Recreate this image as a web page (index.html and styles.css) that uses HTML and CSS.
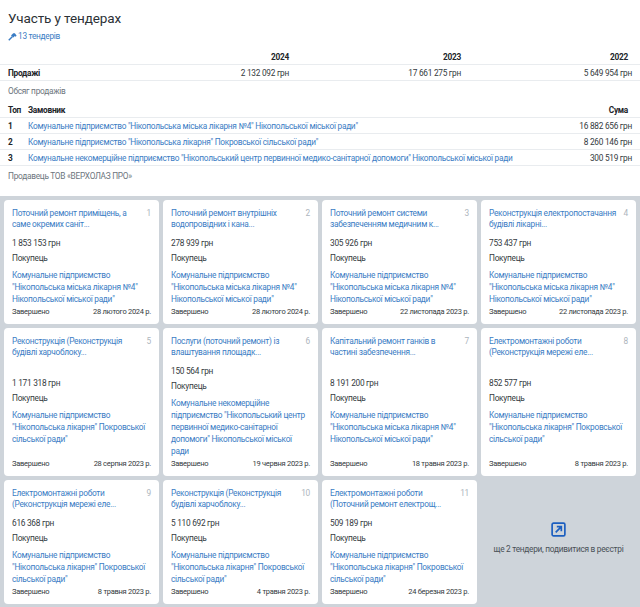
FILE: index.html
```html
<!DOCTYPE html>
<html lang="uk">
<head>
<meta charset="utf-8">
<title>Участь у тендерах</title>
<link rel="stylesheet" href="styles.css">
</head>
<body>
<section class="summary">
  <h1>Участь у тендерах</h1>
  <a class="count" href="#"><svg class="hammer" viewBox="0 0 12 12"><path d="M1 11 6 6" stroke="currentColor" stroke-width="2" fill="none"/><path d="M4 4.6 7 1.5h2.2l2.3 3.6-1.5 1.3-1-1-1.6 1.8z" fill="currentColor"/></svg>13 тендерів</a>
  <table class="years">
    <thead><tr><th></th><th>2024</th><th>2023</th><th class="last">2022</th></tr></thead>
    <tbody><tr><th>Продажі</th><td>2 132 092 грн</td><td>17 661 275 грн</td><td>5 649 954 грн</td></tr></tbody>
  </table>
  <p class="note note-sales">Обсяг продажів</p>
  <table class="top">
    <thead><tr><th class="rank">Топ</th><th class="name">Замовник</th><th class="last">Сума</th></tr></thead>
    <tbody>
      <tr><th>1</th><td class="name"><a href="#">Комунальне підприємство "Нікопольська міська лікарня №4" Нікопольської міської ради"</a></td><td>16 882 656 грн</td></tr>
      <tr><th>2</th><td class="name"><a href="#">Комунальне підприємство "Нікопольська лікарня" Покровської сільської ради"</a></td><td>8 260 146 грн</td></tr>
      <tr><th>3</th><td class="name"><a href="#">Комунальне некомерційне підприємство "Нікопольський центр первинної медико-санітарної допомоги" Нікопольської міської ради</a></td><td>300 519 грн</td></tr>
    </tbody>
  </table>
  <p class="note note-seller">Продавець ТОВ «ВЕРХОЛАЗ ПРО»</p>
</section>
<section class="grid">
  <article class="card"><div class="head"><a href="#">Поточний ремонт приміщень, а саме окремих саніт...</a><span>1</span></div><div class="body"><p class="price">1 853 153 грн</p><p class="role">Покупець</p><a class="buyer" href="#">Комунальне підприємство "Нікопольська міська лікарня №4" Нікопольської міської ради"</a></div><div class="foot"><span>Завершено</span><span>28 лютого 2024 р.</span></div></article>
  <article class="card"><div class="head"><a href="#">Поточний ремонт внутрішніх водопровідних і кана...</a><span>2</span></div><div class="body"><p class="price">278 939 грн</p><p class="role">Покупець</p><a class="buyer" href="#">Комунальне підприємство "Нікопольська міська лікарня №4" Нікопольської міської ради"</a></div><div class="foot"><span>Завершено</span><span>28 лютого 2024 р.</span></div></article>
  <article class="card"><div class="head"><a href="#">Поточний ремонт системи забезпеченням медичним к...</a><span>3</span></div><div class="body"><p class="price">305 926 грн</p><p class="role">Покупець</p><a class="buyer" href="#">Комунальне підприємство "Нікопольська міська лікарня №4" Нікопольської міської ради"</a></div><div class="foot"><span>Завершено</span><span>22 листопада 2023 р.</span></div></article>
  <article class="card"><div class="head"><a href="#">Реконструкція електропостачання будівлі лікарні...</a><span>4</span></div><div class="body"><p class="price">753 437 грн</p><p class="role">Покупець</p><a class="buyer" href="#">Комунальне підприємство "Нікопольська міська лікарня №4" Нікопольської міської ради"</a></div><div class="foot"><span>Завершено</span><span>22 листопада 2023 р.</span></div></article>
  <article class="card"><div class="head"><a href="#">Реконструкція (Реконструкція будівлі харчоблоку...</a><span>5</span></div><div class="body"><p class="price">1 171 318 грн</p><p class="role">Покупець</p><a class="buyer" href="#">Комунальне підприємство "Нікопольська лікарня" Покровської сільської ради"</a></div><div class="foot"><span>Завершено</span><span>28 серпня 2023 р.</span></div></article>
  <article class="card"><div class="head"><a href="#">Послуги (поточний ремонт) із влаштування площадк...</a><span>6</span></div><div class="body"><p class="price">150 564 грн</p><p class="role">Покупець</p><a class="buyer" href="#">Комунальне некомерційне підприємство "Нікопольський центр первинної медико-санітарної допомоги" Нікопольської міської ради</a></div><div class="foot"><span>Завершено</span><span>19 червня 2023 р.</span></div></article>
  <article class="card"><div class="head"><a href="#">Капітальний ремонт ганків в частині забезпечення...</a><span>7</span></div><div class="body"><p class="price">8 191 200 грн</p><p class="role">Покупець</p><a class="buyer" href="#">Комунальне підприємство "Нікопольська міська лікарня №4" Нікопольської міської ради"</a></div><div class="foot"><span>Завершено</span><span>18 травня 2023 р.</span></div></article>
  <article class="card"><div class="head"><a href="#">Електромонтажні роботи (Реконструкція мережі еле...</a><span>8</span></div><div class="body"><p class="price">852 577 грн</p><p class="role">Покупець</p><a class="buyer" href="#">Комунальне підприємство "Нікопольська лікарня" Покровської сільської ради"</a></div><div class="foot"><span>Завершено</span><span>8 травня 2023 р.</span></div></article>
  <article class="card"><div class="head"><a href="#">Електромонтажні роботи (Реконструкція мережі еле...</a><span>9</span></div><div class="body"><p class="price">616 368 грн</p><p class="role">Покупець</p><a class="buyer" href="#">Комунальне підприємство "Нікопольська лікарня" Покровської сільської ради"</a></div><div class="foot"><span>Завершено</span><span>8 травня 2023 р.</span></div></article>
  <article class="card"><div class="head"><a href="#">Реконструкція (Реконструкція будівлі харчоблоку...</a><span>10</span></div><div class="body"><p class="price">5 110 692 грн</p><p class="role">Покупець</p><a class="buyer" href="#">Комунальне підприємство "Нікопольська лікарня" Покровської сільської ради"</a></div><div class="foot"><span>Завершено</span><span>4 травня 2023 р.</span></div></article>
  <article class="card"><div class="head"><a href="#">Електромонтажні роботи (Поточний ремонт електрощ...</a><span>11</span></div><div class="body"><p class="price">509 189 грн</p><p class="role">Покупець</p><a class="buyer" href="#">Комунальне підприємство "Нікопольська лікарня" Покровської сільської ради"</a></div><div class="foot"><span>Завершено</span><span>24 березня 2023 р.</span></div></article>
  <a class="more" href="#"><svg viewBox="0 0 16 16"><rect x="1.2" y="1.2" width="13.6" height="13.6" rx="1.5" fill="none" stroke="currentColor" stroke-width="1.8"/><path d="M5 11 10.5 5.5M6.2 5h4.8v4.8" fill="none" stroke="currentColor" stroke-width="1.8"/></svg><span>ще 2 тендери, подивитися в реєстрі</span></a>
</section>
</body>
</html>
```
FILE: styles.css
```css
* { box-sizing: border-box; }
html, body { margin: 0; padding: 0; }
body {
  width: 640px;
  height: 607px;
  overflow: hidden;
  background: #fff;
  color: #343a40;
  font-family: Roboto, "Noto Sans", sans-serif;
  font-size: 8.3px;
  letter-spacing: -0.27px;
  line-height: 13px;
}
a { color: #3a7cc4; text-decoration: none; }
.summary { height: 196px; padding-top: 8px; }
h1 { margin: 0 0 0 8px; font-size: 13.5px; font-weight: 400; line-height: 21px; color: #2c3136; letter-spacing: -0.1px; }
.count { display: flex; align-items: center; gap: 1px; margin: 0 0 0 8px; height: 14px; }
.hammer { width: 9px; height: 9px; }
table { width: 640px; border-collapse: collapse; table-layout: fixed; }
th, td { padding: 2px 0 0; text-align: right; font-weight: 400; }
thead th { padding-top: 0; vertical-align: bottom; }
th { font-weight: 700; color: #212529; }
.years { margin-top: 4px; }
.years thead tr { height: 17px; }
.years tbody tr { height: 16px; }
.years tr { border-bottom: 1px solid #e9ecef; }
.years th:first-child { text-align: left; padding-left: 8px; width: 120px; }
.years thead th:nth-child(2) { width: 169px; }
.years thead th:nth-child(3) { width: 172px; }
.years td:last-child { padding-right: 8px; }
th.last { padding-right: 12px; }
.note { margin: 0; color: #6c757d; padding-left: 8px; }
.note-sales { padding-top: 4px; height: 20px; }
.top tr { height: 16px; border-bottom: 1px solid #e9ecef; }
.top thead tr { height: 17px; }
.top th:first-child { width: 28px; text-align: left; padding-left: 8px; }
.top .name { text-align: left; width: 512px; white-space: nowrap; }
.top td:last-child { padding-right: 8px; }
.note-seller { padding-top: 4px; }
.grid {
  height: 411px;
  background: #ced4da;
  padding: 4px 4px 0;
  display: grid;
  grid-template-columns: repeat(4, 1fr);
  grid-template-rows: 124px 148px 124px;
  gap: 4px;
}
.card {
  background: #fff;
  border-radius: 4px;
  padding: 8px 8px 7px;
  display: flex;
  flex-direction: column;
}
.head { display: flex; justify-content: space-between; gap: 6px; line-height: 10.5px; height: 27px; }
.head span { color: #adb5bd; }
.body { margin: auto 0; display: flex; flex-direction: column; }
.price, .role { margin: 0; line-height: 13px; }
.role { margin-top: 2px; }
.buyer { margin-top: 4px; line-height: 12px; }
.foot { display: flex; justify-content: space-between; font-size: 7.5px; line-height: 11px; }
.more { display: flex; flex-direction: column; align-items: center; justify-content: center; gap: 6px; padding-bottom: 6px; color: #495057; }
.more svg { width: 15px; height: 15px; color: #1c5fc0; }
```
